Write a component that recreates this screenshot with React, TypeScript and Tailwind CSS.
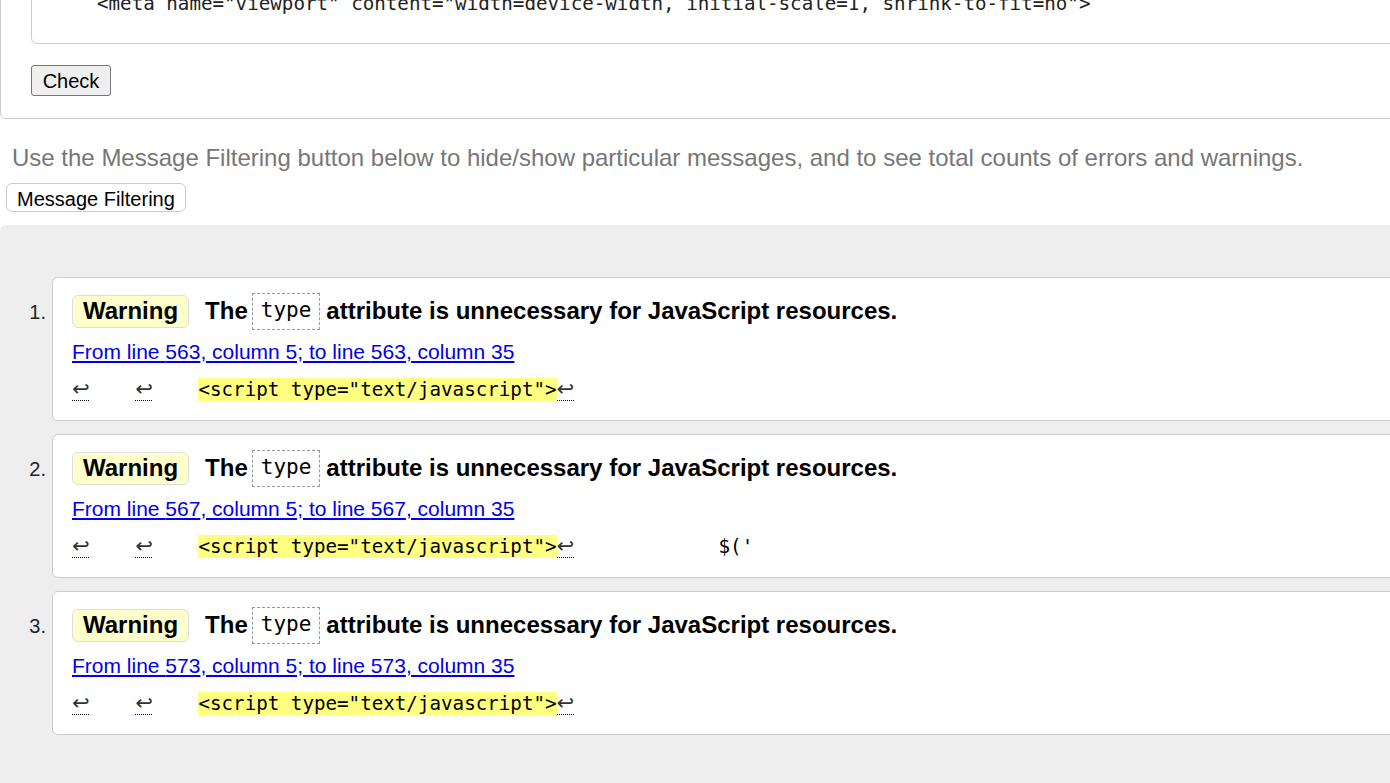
const mono = "font-['DejaVu_Sans_Mono','Liberation_Mono',monospace]";

type Msg = { n: number; from: number; extra?: string };

const messages: Msg[] = [
  { n: 1, from: 563 },
  { n: 2, from: 567, extra: "$('" },
  { n: 3, from: 573 },
];

function Ret() {
  return (
    <span className="inline-block w-[17px] border-b border-dotted border-black font-['DejaVu_Sans',sans-serif] text-[21px] leading-[22px] text-[#333]">
      ↩
    </span>
  );
}

function Card({ m }: { m: Msg }) {
  return (
    <li className="flex">
      <div className="w-[52px] shrink-0 pr-[6px] pt-[23px] text-right text-[20px] leading-[24px] text-[#222]">
        {m.n}.
      </div>
      <div className="flex-1 rounded-md border border-[#ccc] bg-white pl-[19px] pt-[14px] pb-[18px]">
        <div className="flex h-[38px] items-center text-[24px] font-bold">
          <span className="flex h-[33px] items-center rounded-md border border-[#ddd] bg-[#ffffcc] px-[10px]">
            Warning
          </span>
          <span className="ml-[16px]">The</span>
          <code
            className={`${mono} ml-[4px] flex h-[37px] items-center border border-dashed border-[#999] px-[8px] text-[21px] font-normal`}
          >
            type
          </code>
          <span className="ml-[6px]">attribute is unnecessary for JavaScript resources.</span>
        </div>
        <a href="#" className="mt-[10px] block w-max text-[21px] leading-[24px] text-[#0000ee] underline">
          From line {m.from}, column 5; to line {m.from}, column 35
        </a>
        <div className={`${mono} mt-[14px] whitespace-pre text-[19.2px] leading-[24px]`}>
          <Ret />
          {"    "}
          <Ret />
          {"    "}
          <span className="bg-[#ffff80]">{'<script type="text/javascript">'}</span>
          <Ret />
          {m.extra && <span className="ml-[145px]">{m.extra}</span>}
        </div>
      </div>
    </li>
  );
}

export default function App() {
  return (
    <div className="h-[783px] overflow-hidden bg-white font-['Liberation_Sans',Arial,sans-serif] text-black">
      <div className="-mt-[60px] mr-[-20px] rounded-md border border-[#ccc] pl-[30px] pt-[20px] pb-[22px]">
        <div className="h-[83px] rounded-md border border-[#ccc] pl-[65px] pt-[30px]">
          <div className={`${mono} whitespace-pre text-[19.2px] leading-[24px] text-[#222]`}>
            {'<meta name="viewport" content="width=device-width, initial-scale=1, shrink-to-fit=no">'}
          </div>
        </div>
        <button className="mt-[21px] h-[31px] w-[80px] rounded-[3px] border border-[#767676] bg-[#efefef] text-[20px]">
          Check
        </button>
      </div>

      <p className="mt-[25px] pl-[12px] text-[24px] leading-[28px] text-[#777]">
        Use the Message Filtering button below to hide/show particular messages, and to see total counts of errors and
        warnings.
      </p>
      <button className="ml-[6px] mt-[11px] h-[29px] rounded-md border border-[#ccc] bg-white px-[10px] text-[20px]">
        Message Filtering
      </button>

      <div className="mr-[-20px] mt-[12px] h-[600px] rounded-tl-md bg-[#eee] pt-[52px]">
        <ol className="flex flex-col gap-[13px]">
          {messages.map((m) => (
            <Card key={m.n} m={m} />
          ))}
        </ol>
      </div>
    </div>
  );
}
